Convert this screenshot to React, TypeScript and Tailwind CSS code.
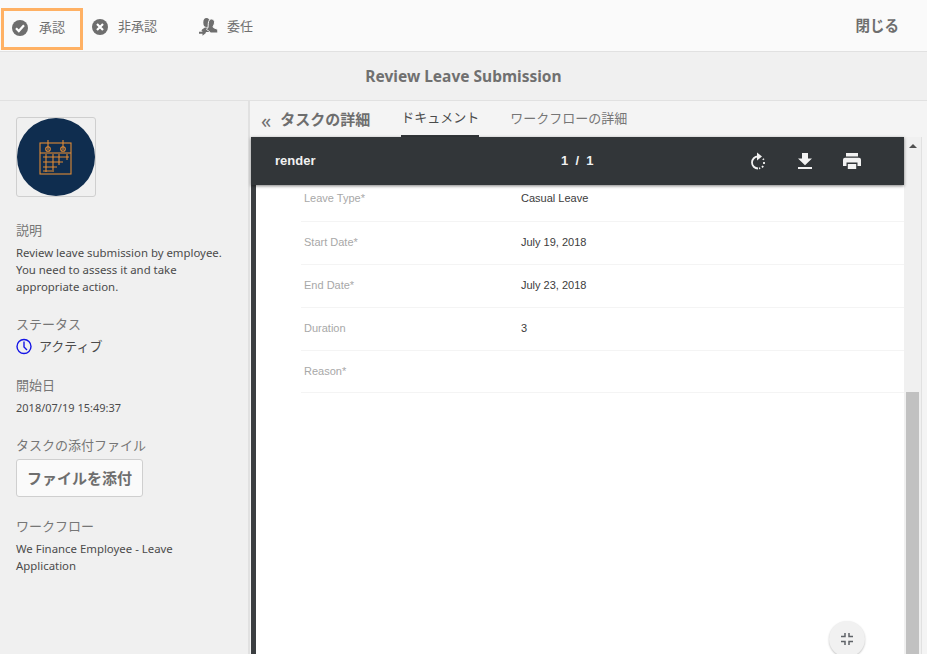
const sans = "font-['Noto_Sans','Noto_Sans_CJK_JP',sans-serif]";

const rows = [
  { label: 'Leave Type*', value: 'Casual Leave', height: 'h-[37px]', pad: 'pb-[16px]' },
  { label: 'Start Date*', value: 'July 19, 2018', height: 'h-[43px]', pad: 'pb-[15px]' },
  { label: 'End Date*', value: 'July 23, 2018', height: 'h-[43px]', pad: 'pb-[15px]' },
  { label: 'Duration', value: '3', height: 'h-[43px]', pad: 'pb-[15px]' },
  { label: 'Reason*', value: '', height: 'h-[42px]', pad: 'pb-[14px]' },
];

function CheckIcon() {
  return (
    <svg width="16" height="16" viewBox="0 0 16 16">
      <circle cx="8" cy="8" r="8" fill="#6e6e6e" />
      <path d="M4 8.300l2.800 2.800L12 5.200" fill="none" stroke="#fff" strokeWidth="2.200" />
    </svg>
  );
}

function CrossIcon() {
  return (
    <svg width="16" height="16" viewBox="0 0 16 16">
      <circle cx="8" cy="8" r="8" fill="#6e6e6e" />
      <path d="M5 5l6 6M11 5l-6 6" fill="none" stroke="#fff" strokeWidth="2.200" />
    </svg>
  );
}

function DelegateIcon() {
  return (
    <svg width="19" height="18" viewBox="0 0 19 18" fill="#6e6e6e">
      <ellipse cx="7.500" cy="4.500" rx="3.200" ry="4.500" />
      <path d="M2.500 13c.2-1.800 2-2.500 3.500-3.500h3l3 4.500H5z" />
      <path
        d="M12.500 1c2.200 0 3.300 1.800 3 4-.2 1.500-.8 2.700-1.400 3.500-.3.500 0 .9.600 1.200l2.400 1c1 .4 1.700 1 1.700 2.300v2h-7.500c-.3-1.300-1.300-2.100-2.500-2.600l-.8-.4c-.5-.3-.4-.8 0-1.300C9.600 9.800 9 8 9.300 5.200 9.500 2.600 10.700 1 12.500 1z"
        stroke="#fafafa"
        strokeWidth="1"
      />
      <path d="M0 13.800h3.500v-2.300l3.700 3.200-3.700 3.100v-2.100H0z" />
    </svg>
  );
}

function CalendarIcon() {
  return (
    <svg width="34" height="36" viewBox="0 0 34 36" fill="none" stroke="#e08a35" strokeWidth="1.100">
      <rect x="1" y="4" width="31" height="31" />
      <path d="M1 14h31" />
      <circle cx="9" cy="10" r="2.300" />
      <circle cx="24" cy="10" r="2.300" />
      <path d="M9 1v10M24 1v10" />
      <path d="M4 18h26M4 23h20M4 28h14M4 32h9" />
      <path d="M7 15v18M14 15v18M20 15v11M28 15v6" />
    </svg>
  );
}

function ClockIcon() {
  return (
    <svg width="16" height="17" viewBox="0 0 16 17" fill="none" stroke="#1414e6" strokeWidth="1.400">
      <circle cx="8" cy="8.500" r="7" />
      <path d="M8 3.500v5.500l3 3" />
    </svg>
  );
}

function RotateIcon() {
  return (
    <svg width="16" height="18" viewBox="0 0 16 18" fill="none" stroke="#f2f2f2" strokeWidth="1.800">
      <path d="M8 4.500A6 6 0 0 0 8 16.500" />
      <path d="M7 0.500v8l5-4z" fill="#f2f2f2" stroke="none" />
      <path d="M13 6.800l.8 1M14 10v2M13.200 14l-1.200 1.400M10.200 16.200l-1.200.3" />
    </svg>
  );
}

function DownloadIcon() {
  return (
    <svg width="16" height="16" viewBox="0 0 16 16" fill="#f2f2f2">
      <path d="M5 0h6v5.500h4L8 12.300 1 5.500h4z" />
      <rect x="1" y="14" width="14" height="2" />
    </svg>
  );
}

function PrinterIcon() {
  return (
    <svg width="18" height="16" viewBox="0 0 18 16" fill="#f2f2f2">
      <rect x="3" y="0" width="12" height="3.500" />
      <path d="M2 4.800h14a2 2 0 0 1 2 2V13h-3.500V9.500h-11V13H0V6.800a2 2 0 0 1 2-2z" />
      <rect x="4.800" y="11" width="8.400" height="5" />
    </svg>
  );
}

function ShrinkIcon() {
  return (
    <svg width="12" height="12" viewBox="0 0 12 12" fill="none" stroke="#5f6368" strokeWidth="1.500">
      <path d="M0 3.500h4V0M8 0v3.500h4M0 8.500h4V12M12 8.500H8V12" />
    </svg>
  );
}

export default function App() {
  return (
    <div className={`${sans} flex h-[654px] w-[927px] flex-col overflow-hidden bg-[#f4f4f4]`}>
      <div className="flex h-[52px] shrink-0 items-start border-b border-[#e1e1e1] bg-[#fafafa]">
        <div className="ml-px mt-2 flex h-[42px] w-[82px] items-center gap-[11px] border-[3px] border-[#ffb164] pb-[3px] pl-[8px]">
          <CheckIcon />
          <span className="text-[13px] text-[#707070]">承認</span>
        </div>
        <div className="ml-[9px] mt-[8px] flex h-[38px] items-center gap-[10px]">
          <CrossIcon />
          <span className="text-[13px] text-[#707070]">非承認</span>
        </div>
        <div className="ml-[42px] mt-[8px] flex h-[38px] items-center gap-[9px]">
          <DelegateIcon />
          <span className="text-[13px] text-[#707070]">委任</span>
        </div>
        <span className="ml-auto mr-[28px] mt-[15px] text-[14.500px] font-bold text-[#6e6e6e]">閉じる</span>
      </div>

      <div className="flex h-[49px] shrink-0 items-center justify-center border-b border-[#e1e1e1] bg-[#f0f0f0] pt-px">
        <span className="text-[15.500px] font-bold text-[#707070]">Review Leave Submission</span>
      </div>

      <div className="flex min-h-0 flex-1">
        <aside className="w-[250px] shrink-0 border-r-2 border-[#e1e1e1] bg-[#f0f0f0] pl-4 pt-4">
          <div className="flex h-[80px] w-[80px] items-center justify-center rounded-[3px] border border-[#cfcfcf]">
            <div className="flex h-[78px] w-[78px] items-center justify-center rounded-full bg-[#0f2d4f]">
              <CalendarIcon />
            </div>
          </div>
          <p className="mt-[24px] text-[13px] leading-[18px] text-[#767676]">説明</p>
          <p className="mt-[5px] w-[215px] text-[11.400px] leading-[17px] text-[#4b4b4b]">
            Review leave submission by employee. You need to assess it and take appropriate action.
          </p>
          <p className="mt-[20px] text-[13px] leading-[18px] text-[#767676]">ステータス</p>
          <div className="mt-[4px] flex items-center gap-[7px] text-[13px] leading-[18px] text-[#4b4b4b]">
            <ClockIcon />
            <span>アクティブ</span>
          </div>
          <p className="mt-[21px] text-[13px] leading-[18px] text-[#767676]">開始日</p>
          <p className="mt-[5px] text-[11px] leading-[17px] text-[#4b4b4b]">2018/07/19 15:49:37</p>
          <p className="mt-[20px] text-[13px] leading-[18px] text-[#767676]">タスクの添付ファイル</p>
          <button className="mt-[5px] h-[38px] w-[127px] rounded-[3px] border border-[#cfcfcf] bg-[#fafafa] text-[15px] font-bold text-[#6e6e6e]">
            ファイルを添付
          </button>
          <p className="mt-[20px] text-[13px] leading-[18px] text-[#767676]">ワークフロー</p>
          <p className="mt-[5px] w-[190px] text-[11.400px] leading-[17px] text-[#4b4b4b]">
            We Finance Employee - Leave Application
          </p>
        </aside>

        <main className="flex min-w-0 flex-1 flex-col">
          <div className="flex h-[36px] shrink-0 items-stretch bg-[#f4f4f4]">
            <span className="ml-[11px] self-center pt-[4px] text-xl leading-none text-[#707070]">«</span>
            <span className="ml-[9px] self-center text-[15px] font-bold text-[#6e6e6e]">タスクの詳細</span>
            <span className="ml-[31px] flex w-[78px] items-center justify-center whitespace-nowrap border-b-2 border-[#323639] text-[13px] text-[#4b4b4b]">
              ドキュメント
            </span>
            <span className="ml-[31px] flex items-center pb-px text-[13px] text-[#767676]">ワークフローの詳細</span>
          </div>

          <div className="flex min-h-0 flex-1 pl-px">
            <div className="relative flex w-[653px] flex-col font-['Liberation_Sans',sans-serif]">
              <div className="z-10 flex h-[48px] shrink-0 items-center bg-[#323639] shadow-[0_1px_3px_rgba(0,0,0,0.5)]">
                <span className="ml-6 w-[286px] text-[13px] font-bold text-[#f1f1f1]">render</span>
                <span className="text-[13px] font-bold text-[#f1f1f1]">1&nbsp;&nbsp;/&nbsp;&nbsp;1</span>
                <span className="ml-[156px] flex items-center">
                  <RotateIcon />
                  <span className="ml-[31px]">
                    <DownloadIcon />
                  </span>
                  <span className="ml-[30px]">
                    <PrinterIcon />
                  </span>
                </span>
              </div>
              <div className="min-h-0 flex-1 border-l-[5px] border-[#3b3e41] bg-white pl-[45px]">
                {rows.map((row) => (
                  <div
                    key={row.label}
                    className={`flex ${row.height} ${row.pad} items-end border-b border-[#f4f4f4] pl-[3px] text-[11px] leading-[13px]`}
                  >
                    <span className="w-[217px] text-[#a8a8a8]">{row.label}</span>
                    <span className="text-[#3c3c3c]">{row.value}</span>
                  </div>
                ))}
              </div>
              <div className="absolute left-[578px] top-[484px] flex h-9 w-9 items-center justify-center rounded-full bg-[#f1f1f1] shadow-[0_1px_2px_rgba(0,0,0,0.25)]">
                <ShrinkIcon />
              </div>
            </div>
            <div className="flex w-[18px] flex-col border-r border-[#e1e1e1] bg-[#f0f0f0] pl-[2px] pr-[2px]">
              <div className="flex h-[255px] shrink-0 justify-center pt-[7px]">
                <div className="h-0 w-0 border-x-[4px] border-b-[4px] border-x-transparent border-b-[#505050]" />
              </div>
              <div className="flex-1 bg-[#c1c1c1]" />
            </div>
            <div className="flex-1 bg-[#f4f4f4]" />
          </div>
        </main>
      </div>
    </div>
  );
}
